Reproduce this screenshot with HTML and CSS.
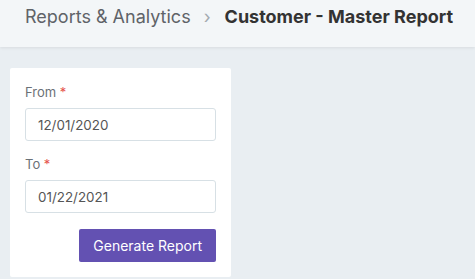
FILE: index.html
```html
<!DOCTYPE html>
<html>
<head>
    <title>Customer - Master Report</title>
    <link rel="stylesheet" href="styles.css">
</head>
<body>
    <div class="page-header">
        <span class="crumb">Reports &amp; Analytics</span>
        <span class="crumb-sep">&rsaquo;</span>
        <span class="crumb-current">Customer - Master Report</span>
    </div>

    <div class="page-body">
        <div class="report-card">
            <div class="field">
                <label class="field-label">From <span class="required">*</span></label>
                <input type="text" class="field-input" value="12/01/2020">
            </div>
            <div class="field">
                <label class="field-label">To <span class="required">*</span></label>
                <input type="text" class="field-input" value="01/22/2021">
            </div>
            <div class="actions">
                <button class="primary-button">Generate Report</button>
            </div>
        </div>
    </div>
</body>
</html>
```

FILE: styles.css
```css
body {
    font-family: Inter, 'Noto Sans', sans-serif;
    margin: 0;
    background-color: #e9eef2;
    color: #333;
    height: 279px;
    overflow: hidden;
}

.page-header {
    height: 47px;
    box-sizing: border-box;
    padding: 6px 25px 0;
    display: flex;
    align-items: flex-start;
    line-height: 22px;
    background-color: #f3f6f8;
    box-shadow: 0 1px 3px rgba(0, 0, 0, 0.08);
    font-size: 18px;
    white-space: nowrap;
}

.crumb {
    color: #5f6368;
}

.crumb-sep {
    color: #a3aab0;
    margin: 0 14px 0 13px;
}

.crumb-current {
    color: #333;
    font-weight: 700;
}

.page-body {
    padding: 21px 10px 0;
}

.report-card {
    width: 221px;
    box-sizing: border-box;
    background-color: #fff;
    padding: 15px 15px 15px;
    border-radius: 2px;
}

.field {
    margin-bottom: 14px;
}

.field-label {
    display: block;
    font-size: 13px;
    line-height: 18px;
    color: #6b7177;
    margin-bottom: 7px;
}

.required {
    color: #e5534b;
}

.field-input {
    display: block;
    width: 100%;
    box-sizing: border-box;
    height: 33px;
    padding: 0 12px;
    border: 1px solid #d7e0e5;
    border-radius: 3px;
    font-family: inherit;
    font-size: 13.4px;
    color: #555;
    outline: none;
}

.actions {
    display: flex;
    justify-content: flex-end;
    padding-top: 2px;
}

.primary-button {
    height: 33px;
    padding: 0 14px;
    background-color: #6351b2;
    color: #fff;
    border: none;
    border-radius: 2px;
    font-family: inherit;
    font-size: 14px;
    cursor: pointer;
}
```
